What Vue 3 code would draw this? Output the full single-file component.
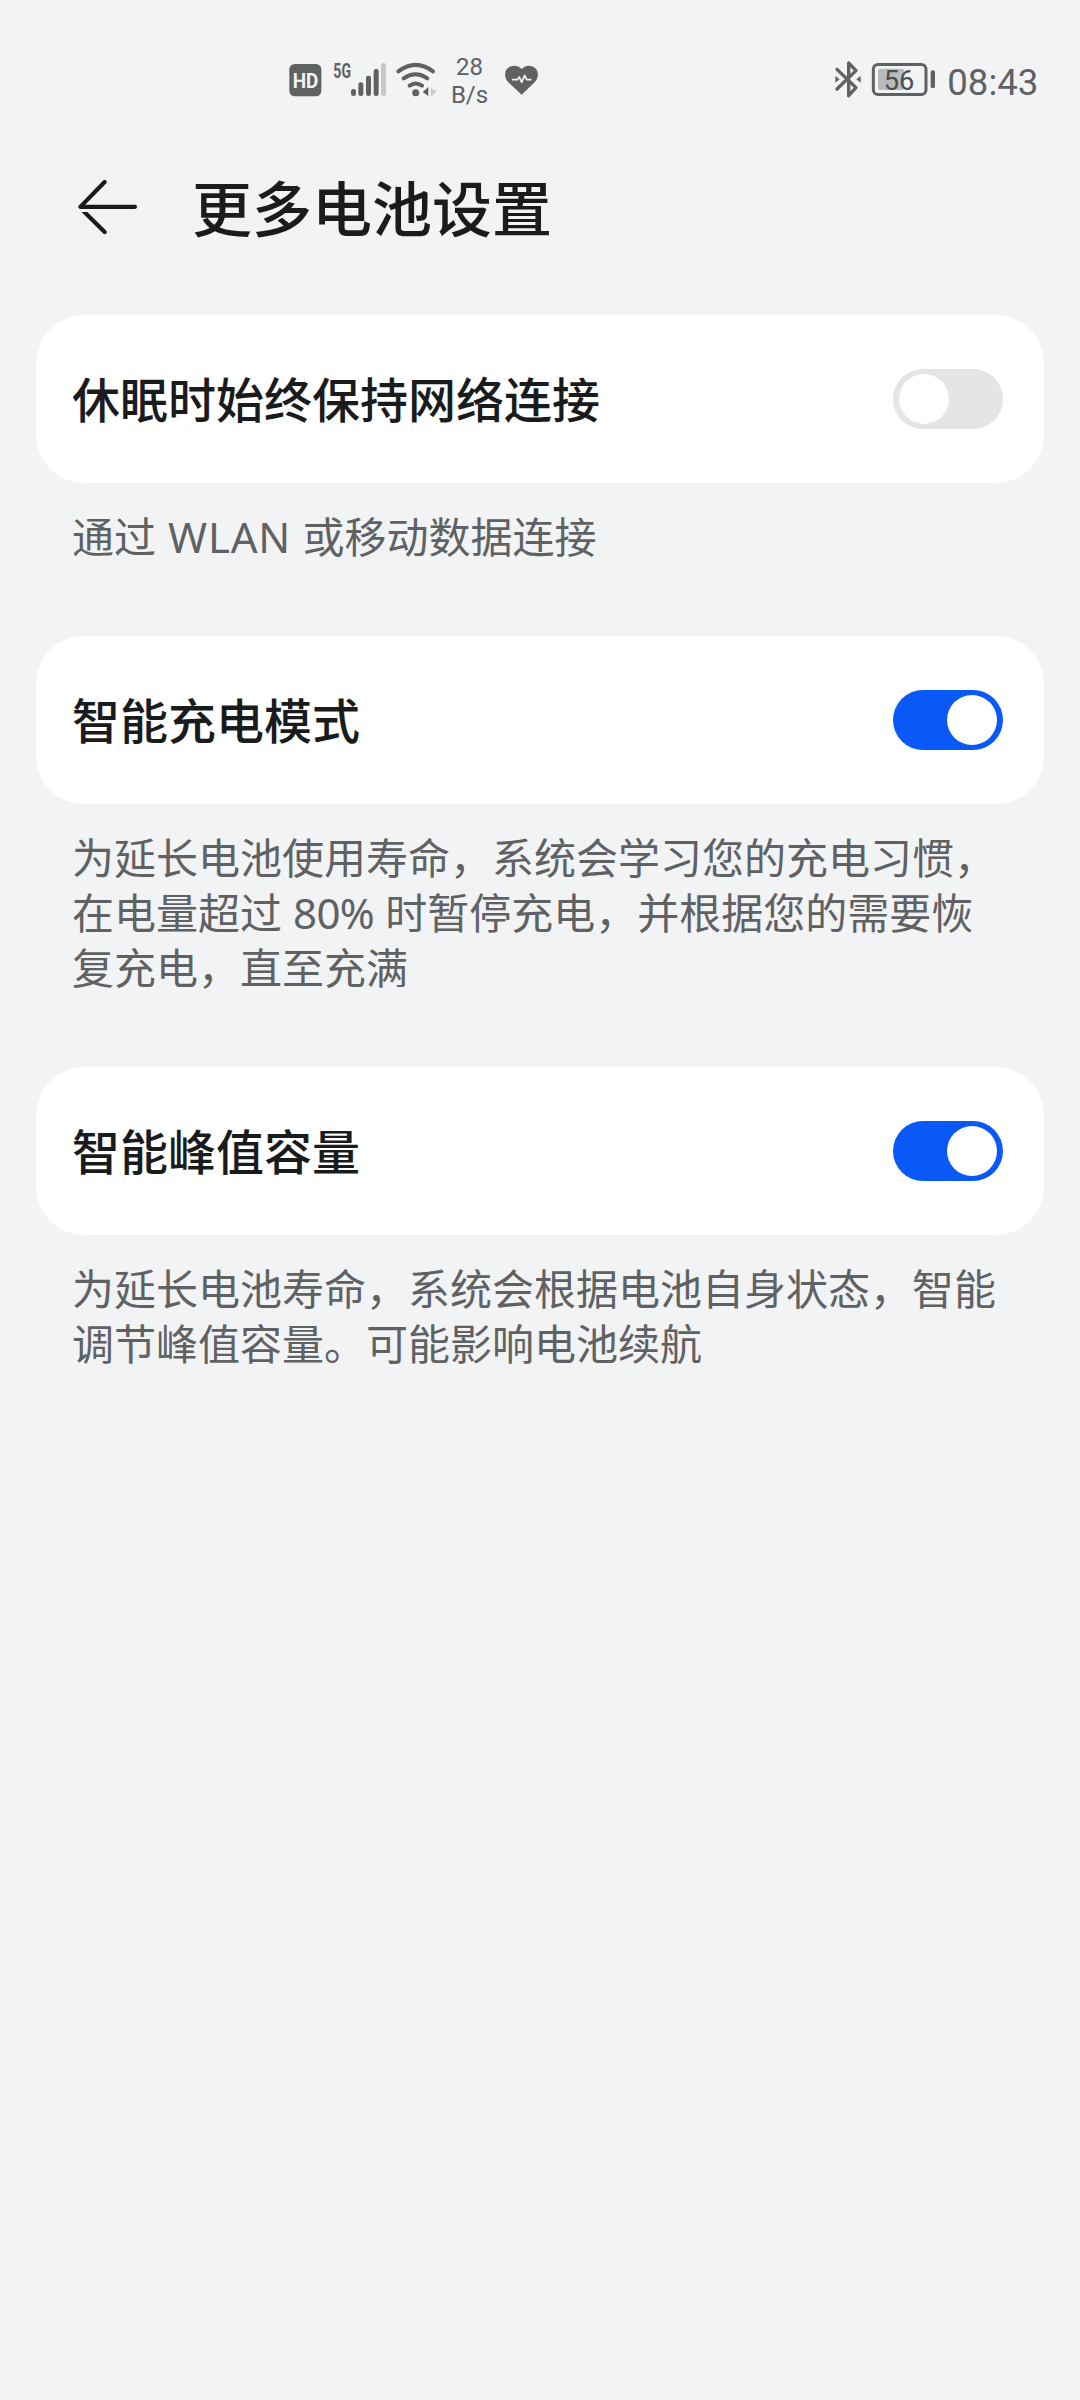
<script setup>
import { reactive } from 'vue'

const settings = reactive([
  {
    title: '休眠时始终保持网络连接',
    on: false,
    lines: [[{ t: '通过' }, { t: 'WLAN', cls: 'wlan' }, { t: '或移动数据连接' }]]
  },
  {
    title: '智能充电模式',
    on: true,
    lines: [
      [{ t: '为延长电池使用寿命，系统会学习您的充电习惯，' }],
      [{ t: '在电量超过' }, { t: '80%', cls: 'percent' }, { t: '时暂停充电，并根据您的需要恢' }],
      [{ t: '复充电，直至充满' }]
    ]
  },
  {
    title: '智能峰值容量',
    on: true,
    lines: [
      [{ t: '为延长电池寿命，系统会根据电池自身状态，智能' }],
      [{ t: '调节峰值容量。可能影响电池续航' }]
    ]
  }
])
</script>

<template>
  <div class="screen">
    <div class="status">
      <div class="group">
        <svg width="50" height="70" viewBox="0 0 150 210">
          <rect x="28" y="57" width="96" height="97" rx="16" fill="#5f6163" />
          <text x="38" y="129" class="bold" font-size="59" fill="#f1f3f5" textLength="77" lengthAdjust="spacingAndGlyphs">HD</text>
        </svg>
        <svg width="62" height="70" viewBox="150 0 186 210" fill="#5f6163">
          <text x="160" y="98" class="bold" font-size="60" textLength="53" lengthAdjust="spacingAndGlyphs">5G</text>
          <rect x="213" y="132" width="15" height="21" rx="7" />
          <rect x="235" y="112" width="15" height="41" rx="7" />
          <rect x="258" y="92" width="15" height="61" rx="7" />
          <rect x="281" y="72" width="15" height="81" rx="7" />
          <rect x="303" y="54" width="15" height="99" rx="7" fill="#c6c8ca" />
        </svg>
        <svg width="48" height="70" viewBox="336 0 144 210" fill="#5f6163">
          <g fill="none" stroke="#5f6163" stroke-width="12" stroke-linecap="round">
            <path d="M355 79 Q407 40 459 79" />
            <path d="M371 100 Q407 76 442 100" />
            <path d="M389 122 Q407 109 426 122" />
          </g>
          <circle cx="407" cy="143" r="10.5" />
          <path d="M428 141 L445 126 V153Z" />
          <path d="M453 125 L458 134 L471 137 L456 153 H453Z" fill="#c6c8ca" />
        </svg>
        <div class="net"><span>28</span><span>B/s</span></div>
        <svg width="45" height="70" viewBox="210 0 135 210">
          <path d="M275 149 L235 112 C222 98 223 80 233 70 C245 58 264 60 275 72 C286 60 305 58 316 70 C326 80 327 98 314 112Z" fill="#5f6163" />
          <path d="M248 104 H262 L268 96 L275 112 L284 91 L290 104 H302" fill="none" stroke="#f1f3f5" stroke-width="5" stroke-linejoin="round" stroke-linecap="round" />
        </svg>
      </div>
      <div class="group">
        <svg width="38" height="70" viewBox="30 0 114 210">
          <path d="M51 73 L108 128 L86 152 V54 L108 77 L51 132" fill="none" stroke="#5f6163" stroke-width="10" stroke-linejoin="round" stroke-linecap="round" />
          <path d="M46 93 L59 103 L46 113Z M122 93 L109 103 L122 113Z" fill="#5f6163" />
        </svg>
        <svg width="72" height="70" viewBox="144 0 216 210">
          <rect x="174" y="71" width="78" height="64" rx="7" fill="#b8babc" />
          <rect x="160" y="58.500" width="158" height="90" rx="14" fill="none" stroke="#5f6163" stroke-width="9" />
          <rect x="332" y="76" width="13" height="54" rx="6" fill="#5f6163" />
          <text x="191" y="135" class="digits" font-size="82" fill="#4c4e50" textLength="92" lengthAdjust="spacingAndGlyphs">56</text>
        </svg>
        <svg width="105" height="70" viewBox="360 0 315 210">
          <text x="382" y="151" class="digits" font-size="113" fill="#5f6163" textLength="273" lengthAdjust="spacingAndGlyphs">08:43</text>
        </svg>
      </div>
    </div>

    <header class="header">
      <svg width="66" height="60" viewBox="48 51 198 180">
        <defs>
          <clipPath id="lower"><rect x="40" y="156" width="120" height="80" /></clipPath>
        </defs>
        <g fill="none" stroke="#1a1b1c" stroke-width="12.500" stroke-linecap="round" stroke-linejoin="round">
          <path d="M134 66 L61 140.500 H225" />
          <path d="M60 143 L134 216" clip-path="url(#lower)" />
        </g>
      </svg>
      <h1>更多电池设置</h1>
    </header>

    <section v-for="s in settings" :key="s.title">
      <div class="card">
        <h2>{{ s.title }}</h2>
        <button class="switch" :class="{ on: s.on }" role="switch" :aria-checked="s.on" @click="s.on = !s.on">
          <i></i>
        </button>
      </div>
      <div class="desc">
        <div v-for="(line, n) in s.lines" :key="n" class="line">
          <span v-for="(p, i) in line" :key="i" :class="p.cls">{{ p.t }}</span>
        </div>
      </div>
    </section>
  </div>
</template>

<style>
body {
  margin: 0;
  background: #f1f3f5;
}
</style>

<style scoped>
.screen {
  box-sizing: border-box;
  width: 1080px;
  min-height: 2400px;
  background: #f1f3f5;
  font-family: "Noto Sans CJK SC", sans-serif;
}
.status {
  display: flex;
  justify-content: space-between;
  height: 70px;
  padding: 45px 35px 0 280px;
}
.group {
  display: flex;
}
.group svg {
  display: block;
}
.bold {
  font-family: Roboto, sans-serif;
  font-weight: 700;
}
.digits {
  font-family: Roboto, sans-serif;
}
.net {
  display: flex;
  flex-direction: column;
  align-items: center;
  width: 60px;
  padding: 8px 1px 0 0;
  box-sizing: border-box;
  font: 24px/28px Roboto, sans-serif;
  color: #5f6163;
}
.header {
  display: flex;
  align-items: center;
  gap: 50px;
  height: 184px;
  padding: 0 76px;
  margin-bottom: 16px;
}
h1 {
  margin: 0;
  padding-bottom: 3px;
  font-size: 60px;
  font-weight: 500;
  line-height: 80px;
  color: #1a1b1c;
}
.card {
  display: flex;
  align-items: center;
  justify-content: space-between;
  height: 168px;
  margin: 0 36px;
  padding: 0 41px 0 36px;
  box-sizing: border-box;
  border-radius: 48px;
  background: #fff;
}
h2 {
  margin: 0;
  padding-bottom: 4px;
  font-size: 48px;
  font-weight: 500;
  line-height: 64px;
  color: #1a1b1c;
}
.switch {
  display: flex;
  align-items: center;
  width: 110px;
  height: 60px;
  padding: 0 6px;
  border: 0;
  border-radius: 30px;
  background: #e5e5e5;
}
.switch i {
  width: 50px;
  height: 50px;
  border-radius: 50%;
  background: #fff;
}
.switch.on {
  justify-content: flex-end;
  background: #0a59f7;
}
.desc {
  padding: 24px 72px 74px;
  font-size: 42px;
  line-height: 55px;
  color: #5f6163;
}
.line {
  display: flex;
  align-items: baseline;
  height: 55px;
  white-space: nowrap;
}
.wlan,
.percent {
  font-family: "Noto Sans", sans-serif;
  line-height: 1;
}
.wlan {
  margin: 0 11.5px 0 12px;
  letter-spacing: 0.8px;
}
.percent {
  margin: 0 11px;
  letter-spacing: -0.6px;
}
</style>
